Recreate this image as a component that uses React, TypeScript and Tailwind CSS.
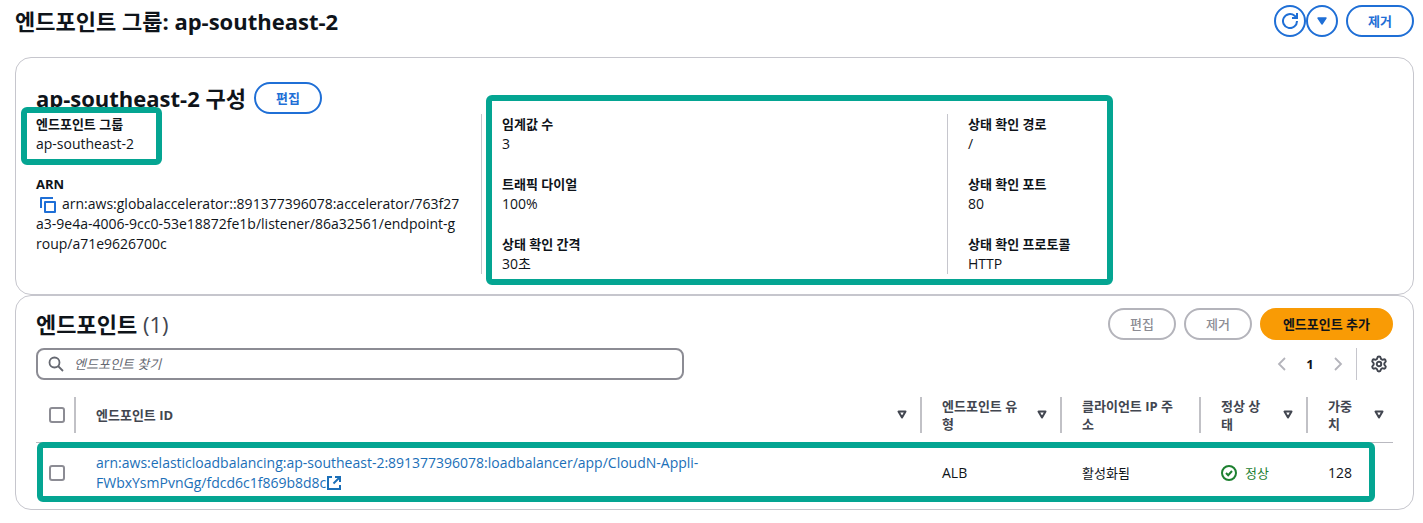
import type { ReactNode } from "react";
import { Settings } from "lucide-react";

function RefreshIcon() {
  return (
    <svg viewBox="0 0 16 16" className="size-4" fill="none" stroke="currentColor" strokeWidth="2" aria-hidden="true">
      <path d="M15 8a7 7 0 1 1-2.4-5.2L14.6 4.6" />
      <path d="M10 5h5V0" />
    </svg>
  );
}

function CaretIcon() {
  return (
    <svg viewBox="0 0 10 8" className="h-2 w-2.5" fill="currentColor" stroke="currentColor" strokeWidth="1.4" strokeLinejoin="round" aria-hidden="true">
      <path d="M1 1h8L5 7z" />
    </svg>
  );
}

function SortIcon() {
  return (
    <svg viewBox="0 0 10 9" className="h-[9px] w-2.5 shrink-0" fill="none" stroke="currentColor" strokeWidth="2" strokeLinejoin="round" aria-hidden="true">
      <path d="M1.5 1.5h7L5 7.5z" />
    </svg>
  );
}

function CopyIcon() {
  return (
    <svg viewBox="0 0 16 16" className="size-4" fill="none" stroke="currentColor" strokeWidth="2" strokeLinejoin="round" aria-hidden="true">
      <path d="M1 11V1h12" />
      <path d="M5 5h10v10H5z" />
    </svg>
  );
}

function SearchIcon() {
  return (
    <svg viewBox="0 0 16 16" className="size-4 shrink-0 text-[#656871]" fill="none" stroke="currentColor" strokeWidth="1.8" aria-hidden="true">
      <circle cx="6.5" cy="6.5" r="5" />
      <path d="M10 10l5 5" />
    </svg>
  );
}

function ExternalIcon() {
  return (
    <svg viewBox="0 0 16 16" className="inline size-4 align-[-3px]" fill="none" stroke="currentColor" strokeWidth="2" aria-hidden="true">
      <path d="M6 2H2v12h12v-4" />
      <path d="M9 2h5v5" />
      <path d="M7.5 8.5 14 2" />
    </svg>
  );
}

function CheckIcon() {
  return (
    <svg viewBox="0 0 16 16" className="size-4" fill="none" stroke="currentColor" strokeWidth="2" aria-hidden="true">
      <circle cx="8" cy="8" r="7" />
      <path d="M5 8l2.2 2.2L11 6" />
    </svg>
  );
}

function Chevron({ d }: { d: string }) {
  return (
    <svg viewBox="0 0 16 16" className="size-4" fill="none" stroke="currentColor" strokeWidth="1.8" aria-hidden="true">
      <path d={d} />
    </svg>
  );
}

const pill = "h-8 rounded-full border-2 text-[13px]";
const highlight = "pointer-events-none absolute rounded-md border-6 border-[#04a592]";
const box = "block size-4 appearance-none rounded-[3px] border-2 border-[#8c8c94] bg-white checked:bg-[#1f6fd6]";

function Field({ label, children }: { label: string; children: ReactNode }) {
  return (
    <div>
      <dt className="text-[13px] leading-5 font-bold">{label}</dt>
      <dd>{children}</dd>
    </div>
  );
}

function HeadCell({ label, sortable = true, last = false }: { label: string; sortable?: boolean; last?: boolean }) {
  const edge = last ? "pr-[9px]" : sortable ? "border-r-2 border-[#c1c1c6] pr-[13px]" : "border-r-2 border-[#c1c1c6] pr-5";
  return (
    <th scope="col" className="h-[54px] p-0 text-left align-middle text-[13px] font-bold text-[#424650]">
      <div className={`flex h-9 items-center justify-between gap-4 pl-5 leading-[18px] ${edge}`}>
        <span>{label}</span>
        {sortable && <SortIcon />}
      </div>
    </th>
  );
}

export default function App() {
  return (
    <main className="bg-white pt-[5px] pr-[9px] pb-3.5 pl-[15px] font-['Open_Sans','Noto_Sans_CJK_KR',sans-serif] text-sm leading-5 text-[#0f141a]">
      <header className="mb-5 flex h-8 items-center justify-between">
        <h1 className="text-[22px] font-bold">엔드포인트 그룹: ap-southeast-2</h1>
        <div className="flex text-[#1f6fd6]">
          <button aria-label="새로 고침" className="flex size-8 items-center justify-center rounded-full border-2 border-current">
            <RefreshIcon />
          </button>
          <button aria-label="작업" className="flex size-8 items-center justify-center rounded-full border-2 border-current">
            <CaretIcon />
          </button>
          <button className={`${pill} ml-2 border-current px-5 font-bold`}>제거</button>
        </div>
      </header>

      <section className="rounded-2xl border border-[#c6c6cd] px-5 pt-6 pb-5">
        <div className="flex h-8 items-center gap-2">
          <h2 className="text-[22px] font-bold">ap-southeast-2 구성</h2>
          <button className={`${pill} border-current px-5 font-bold text-[#1f6fd6]`}>편집</button>
        </div>
        <div className="relative flex gap-5">
          <dl className="flex flex-1 flex-col gap-5">
            <div className="relative">
              <Field label="엔드포인트 그룹">ap-southeast-2</Field>
              <div className={`${highlight} -top-[7px] -left-[15px] h-[58px] w-[141px]`} />
            </div>
            <Field label="ARN">
              <button aria-label="ARN 복사" className="mr-1.5 ml-1 inline-block align-[-4px] text-[#1f6fd6]">
                <CopyIcon />
              </button>
              arn:aws:globalaccelerator::891377396078:accelerator/763f27
              <br />
              a3-9e4a-4006-9cc0-53e18872fe1b/listener/86a32561/endpoint-g
              <br />
              roup/a71e9626700c
            </Field>
          </dl>
          <div className="w-px bg-[#c6c6cd]" />
          <dl className="flex flex-1 flex-col gap-5">
            <Field label="임계값 수">3</Field>
            <Field label="트래픽 다이얼">100%</Field>
            <Field label="상태 확인 간격">30초</Field>
          </dl>
          <div className="w-px bg-[#c6c6cd]" />
          <dl className="flex flex-1 flex-col gap-5">
            <Field label="상태 확인 경로">/</Field>
            <Field label="상태 확인 포트">80</Field>
            <Field label="상태 확인 프로토콜">HTTP</Field>
          </dl>
          <div className={`${highlight} -top-[19px] right-[280px] -bottom-[11px] left-[450px]`} />
        </div>
      </section>

      <section className="rounded-2xl border border-[#c6c6cd] px-5 pt-3 pb-1.5">
        <div className="flex h-8 items-center justify-between">
          <h2 className="text-[22px] font-bold">
            엔드포인트 <span className="font-normal text-[#424650]">(1)</span>
          </h2>
          <div className="flex gap-2">
            <button disabled className={`${pill} border-[#b4b4bb] px-5 font-medium text-[#8c8c94]`}>편집</button>
            <button disabled className={`${pill} border-[#b4b4bb] px-5 font-medium text-[#8c8c94]`}>제거</button>
            <button className={`${pill} border-[#f99b05] bg-[#f99b05] px-[21px] font-bold`}>엔드포인트 추가</button>
          </div>
        </div>

        <div className="mt-2 flex h-8 justify-between">
          <label className="flex w-[648px] items-center gap-2.5 rounded-lg border-2 border-[#8c8c94] px-2.5">
            <SearchIcon />
            <input
              type="search"
              aria-label="엔드포인트 찾기"
              placeholder="엔드포인트 찾기"
              className="min-w-0 flex-1 bg-transparent text-[13px] outline-none placeholder:text-[#656871] placeholder:italic"
            />
          </label>
          <div className="flex items-center">
            <button disabled aria-label="이전 페이지" className="text-[#b4b4bb]">
              <Chevron d="M11 2 5 8l6 6" />
            </button>
            <button aria-current="page" className="w-10 text-[13px] font-bold">1</button>
            <button disabled aria-label="다음 페이지" className="text-[#b4b4bb]">
              <Chevron d="M5 2l6 6-6 6" />
            </button>
            <div className="ml-2.5 h-8 w-px bg-[#c6c6cd]" />
            <button aria-label="기본 설정" className="mr-[5px] ml-[13px] text-[#424650]">
              <Settings className="size-[18px]" strokeWidth={2.6} />
            </button>
          </div>
        </div>

        <div className="relative mt-2">
          <table className="w-full table-fixed border-collapse">
            <colgroup>
              <col className="w-10" />
              <col />
              <col className="w-[140px]" />
              <col className="w-[139px]" />
              <col className="w-[107px]" />
              <col className="w-[85px]" />
            </colgroup>
            <thead>
              <tr className="border-b border-[#b9b9c0]">
                <th scope="col" className="p-0">
                  <div className="flex h-9 items-center border-r-2 border-[#c1c1c6] pl-[13px]">
                    <input type="checkbox" aria-label="모두 선택" className={box} />
                  </div>
                </th>
                <HeadCell label="엔드포인트 ID" />
                <HeadCell label="엔드포인트 유형" />
                <HeadCell label="클라이언트 IP 주소" sortable={false} />
                <HeadCell label="정상 상태" />
                <HeadCell label="가중치" last />
              </tr>
            </thead>
            <tbody>
              <tr className="h-[61px]">
                <td className="pl-[13px]">
                  <input type="checkbox" aria-label="엔드포인트 선택" className={box} />
                </td>
                <td className="pl-5">
                  <a href="#endpoint" className="block max-w-[640px] text-[#1b6fb8]">
                    arn:aws:elasticloadbalancing:ap-southeast-2:891377396078:loadbalancer/app/CloudN-Appli-FWbxYsmPvnGg/fdcd6c1f869b8d8c
                    <ExternalIcon />
                  </a>
                </td>
                <td className="pl-5">ALB</td>
                <td className="pl-5 text-[13px]">활성화됨</td>
                <td className="pl-5 text-[13px]">
                  <span className="flex items-center gap-2 text-[#1d8030]">
                    <CheckIcon />
                    정상
                  </span>
                </td>
                <td className="pl-5">128</td>
              </tr>
            </tbody>
          </table>
          <div className={`${highlight} top-[54px] right-[18px] bottom-px left-px`} />
        </div>
      </section>
    </main>
  );
}
